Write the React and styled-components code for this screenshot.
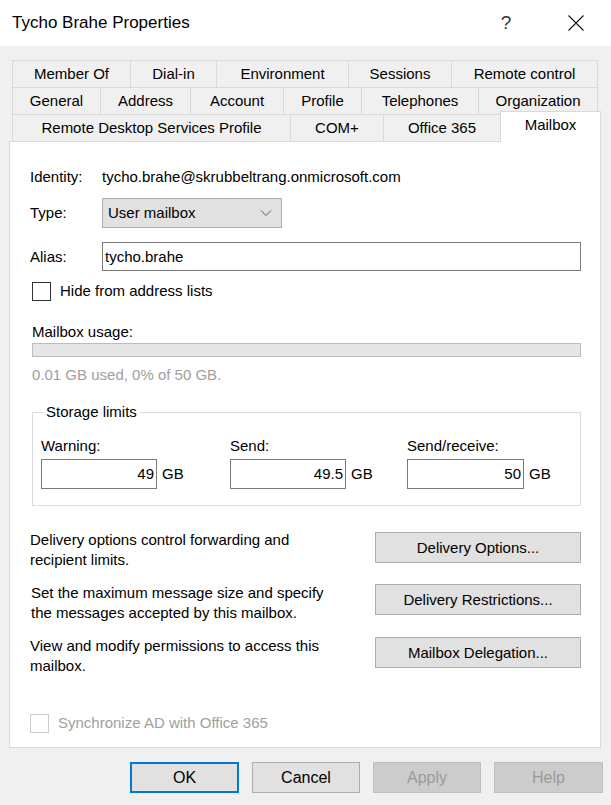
import React from "react";
import styled, { createGlobalStyle } from "styled-components";

const Global = createGlobalStyle`
  html, body { margin: 0; padding: 0; background: #f0f0f0; }
  body { font-family: "Liberation Sans", Arial, sans-serif; font-size: 15px; color: #000; }
  * { box-sizing: border-box; }
`;

const Window = styled.div`
  width: 611px;
  height: 805px;
  background: #f0f0f0;
  display: flex;
  flex-direction: column;
  overflow: hidden;
`;

const TitleBar = styled.div`
  height: 46px;
  background: #fff;
  display: flex;
  align-items: center;
  padding-left: 12px;
  flex-shrink: 0;
`;

const Title = styled.div`
  flex: 1;
  font-size: 17px;
  line-height: 20px;
`;

const TitleButton = styled.div`
  width: 70px;
  height: 46px;
  display: flex;
  align-items: center;
  justify-content: center;
  font-size: 19px;
  color: #333;
`;

const Body = styled.div`
  padding: 14px 10px 0 9px;
  display: flex;
  flex-direction: column;
`;

const TabRows = styled.div`
  display: flex;
  flex-direction: column;
  padding-left: 3px;
`;

const TabRow = styled.div`
  display: flex;
  height: 27px;
`;

const Tab = styled.div`
  height: 27px;
  border: 1px solid #d9d9d9;
  border-bottom: none;
  margin-left: -1px;
  background: #f0f0f0;
  display: flex;
  align-items: center;
  justify-content: center;
  line-height: 20px;
  white-space: nowrap;
  &:first-child { margin-left: 0; }
`;

const SelectedTab = styled.div`
  position: relative;
  z-index: 2;
  height: 31px;
  margin-top: -3px;
  margin-left: -1px;
  border: 1px solid #d9d9d9;
  border-bottom: none;
  background: #fff;
  display: flex;
  align-items: flex-start;
  justify-content: center;
  padding-top: 3px;
  line-height: 20px;
`;

const Panel = styled.div`
  height: 607px;
  background: #fff;
  border: 1px solid #d9d9d9;
  padding: 25px 19px 0 20px;
  display: flex;
  flex-direction: column;
  position: relative;
  z-index: 1;
`;

const FieldRow = styled.div`
  display: flex;
  align-items: center;
  margin-top: ${(p) => p.$mt || 0}px;
  line-height: 20px;
`;

const Label = styled.div`
  width: 72px;
  flex-shrink: 0;
`;

const Select = styled.div`
  width: 180px;
  height: 30px;
  background: #e1e1e1;
  border: 1px solid #adadad;
  display: flex;
  align-items: center;
  justify-content: space-between;
  padding: 0 9px 0 5px;
`;

const TextInput = styled.div`
  flex: 1;
  height: 29px;
  border: 1px solid #7a7a7a;
  display: flex;
  align-items: center;
  padding-left: 2px;
  background: #fff;
`;

const CheckRow = styled.div`
  display: flex;
  align-items: center;
  margin-top: ${(p) => p.$mt || 0}px;
  margin-left: ${(p) => p.$ml || 0}px;
  line-height: 20px;
  color: ${(p) => (p.$disabled ? "#a0a0a0" : "#000")};
`;

const Box = styled.div`
  width: 19px;
  height: 19px;
  border: 1px solid ${(p) => (p.$disabled ? "#cccccc" : "#333")};
  background: #fff;
  margin-right: 9px;
`;

const Text = styled.div`
  line-height: 20px;
  margin-top: ${(p) => p.$mt || 0}px;
  margin-left: ${(p) => p.$ml || 0}px;
  color: ${(p) => p.$color || "#000"};
`;

const Progress = styled.div`
  margin: 1px 0 0 2px;
  height: 14px;
  background: #e6e6e6;
  border: 1px solid #bcbcbc;
`;

const Group = styled.fieldset`
  margin: 17px 0 0 2px;
  padding: 14px 8px 16px 8px;
  border: 1px solid #dcdcdc;
  min-width: 0;
`;

const Legend = styled.legend`
  padding: 0 3px;
  margin-left: 2px;
  line-height: 20px;
`;

const LimitGrid = styled.div`
  display: grid;
  grid-template-columns: 189px 177px 1fr;
`;

const LimitCol = styled.div`
  display: flex;
  flex-direction: column;
  line-height: 20px;
`;

const LimitInputRow = styled.div`
  display: flex;
  align-items: center;
  margin-top: 3px;
`;

const NumInput = styled.div`
  width: ${(p) => p.$w || 116}px;
  height: 30px;
  border: 1px solid #7a7a7a;
  display: flex;
  align-items: center;
  justify-content: flex-end;
  padding-right: 2px;
  margin-right: 5px;
`;

const ActionRow = styled.div`
  display: flex;
  justify-content: space-between;
  align-items: flex-start;
  margin-top: ${(p) => p.$mt || 0}px;
  height: 40px;
`;

const ActionText = styled.div`
  line-height: 20px;
  padding-left: ${(p) => p.$pl || 0}px;
`;

const Button = styled.div`
  width: ${(p) => p.$w}px;
  height: 31px;
  margin-top: ${(p) => p.$mt || 0}px;
  background: ${(p) => (p.$disabled ? "#cccccc" : "#e1e1e1")};
  border: ${(p) => (p.$default ? "2px solid #0078d7" : p.$disabled ? "1px solid #bfbfbf" : "1px solid #adadad")};
  color: ${(p) => (p.$disabled ? "#9a9a9a" : "#000")};
  display: flex;
  align-items: center;
  justify-content: center;
  line-height: 20px;
  font-size: ${(p) => p.$fs || 15}px;
  flex-shrink: 0;
`;

const Footer = styled.div`
  display: flex;
  justify-content: flex-end;
  gap: 13px;
  margin: 14px -2px 0 0;
`;

const tabRows = [
  [["Member Of", 119], ["Dial-in", 87], ["Environment", 133], ["Sessions", 104], ["Remote control", 147]],
  [["General", 89], ["Address", 91], ["Account", 94], ["Profile", 79], ["Telephones", 118], ["Organization", 120]],
];
const lastRow = [["Remote Desktop Services Profile", 279], ["COM+", 94], ["Office 365", 118]];

const Chevron = () => (
  <svg width="12" height="8" viewBox="0 0 12 8">
    <path d="M1 1.5 L6 6.5 L11 1.5" fill="none" stroke="#555" strokeWidth="1" />
  </svg>
);

const CloseIcon = () => (
  <svg width="16" height="16" viewBox="0 0 16 16">
    <path d="M0.5 0.5 L15.5 15.5 M15.5 0.5 L0.5 15.5" stroke="#111" strokeWidth="1.1" />
  </svg>
);

export default function App() {
  return (
    <>
      <Global />
      <Window>
        <TitleBar>
          <Title>Tycho Brahe Properties</Title>
          <TitleButton>?</TitleButton>
          <TitleButton>
            <CloseIcon />
          </TitleButton>
        </TitleBar>
        <Body>
          <TabRows>
            {tabRows.map((row, i) => (
              <TabRow key={i}>
                {row.map(([t, w]) => (
                  <Tab key={t} style={{ width: w }}>{t}</Tab>
                ))}
              </TabRow>
            ))}
            <TabRow>
              {lastRow.map(([t, w]) => (
                <Tab key={t} style={{ width: w }}>{t}</Tab>
              ))}
              <SelectedTab style={{ width: 101 }}>Mailbox</SelectedTab>
            </TabRow>
          </TabRows>
          <Panel>
            <FieldRow>
              <Label>Identity:</Label>
              <span>tycho.brahe@skrubbeltrang.onmicrosoft.com</span>
            </FieldRow>
            <FieldRow $mt={11}>
              <Label>Type:</Label>
              <Select>
                <span>User mailbox</span>
                <Chevron />
              </Select>
            </FieldRow>
            <FieldRow $mt={14}>
              <Label>Alias:</Label>
              <TextInput>tycho.brahe</TextInput>
            </FieldRow>
            <CheckRow $mt={10} $ml={2}>
              <Box />
              Hide from address lists
            </CheckRow>
            <Text $mt={21} $ml={2}>Mailbox usage:</Text>
            <Progress />
            <Text $mt={8} $ml={2} $color="#a0a0a0">0.01 GB used, 0% of 50 GB.</Text>
            <Group>
              <Legend>Storage limits</Legend>
              <LimitGrid>
                <LimitCol>
                  Warning:
                  <LimitInputRow>
                    <NumInput>49</NumInput>GB
                  </LimitInputRow>
                </LimitCol>
                <LimitCol>
                  Send:
                  <LimitInputRow>
                    <NumInput>49.5</NumInput>GB
                  </LimitInputRow>
                </LimitCol>
                <LimitCol>
                  Send/receive:
                  <LimitInputRow>
                    <NumInput $w={117}>50</NumInput>GB
                  </LimitInputRow>
                </LimitCol>
              </LimitGrid>
            </Group>
            <ActionRow $mt={24}>
              <ActionText>
                Delivery options control forwarding and
                <br />
                recipient limits.
              </ActionText>
              <Button $w={206} $mt={2}>Delivery Options...</Button>
            </ActionRow>
            <ActionRow $mt={13}>
              <ActionText $pl={1}>
                Set the maximum message size and specify
                <br />
                the messages accepted by this mailbox.
              </ActionText>
              <Button $w={206} $mt={1}>Delivery Restrictions...</Button>
            </ActionRow>
            <ActionRow $mt={13}>
              <ActionText>
                View and modify permissions to access this
                <br />
                mailbox.
              </ActionText>
              <Button $w={206} $mt={1}>Mailbox Delegation...</Button>
            </ActionRow>
            <CheckRow $mt={37} $disabled>
              <Box $disabled />
              Synchronize AD with Office 365
            </CheckRow>
          </Panel>
          <Footer>
            <Button $w={109} $default $fs={16}>OK</Button>
            <Button $w={108} $fs={16}>Cancel</Button>
            <Button $w={108} $disabled $fs={16}>Apply</Button>
            <Button $w={109} $disabled $fs={16}>Help</Button>
          </Footer>
        </Body>
      </Window>
    </>
  );
}
